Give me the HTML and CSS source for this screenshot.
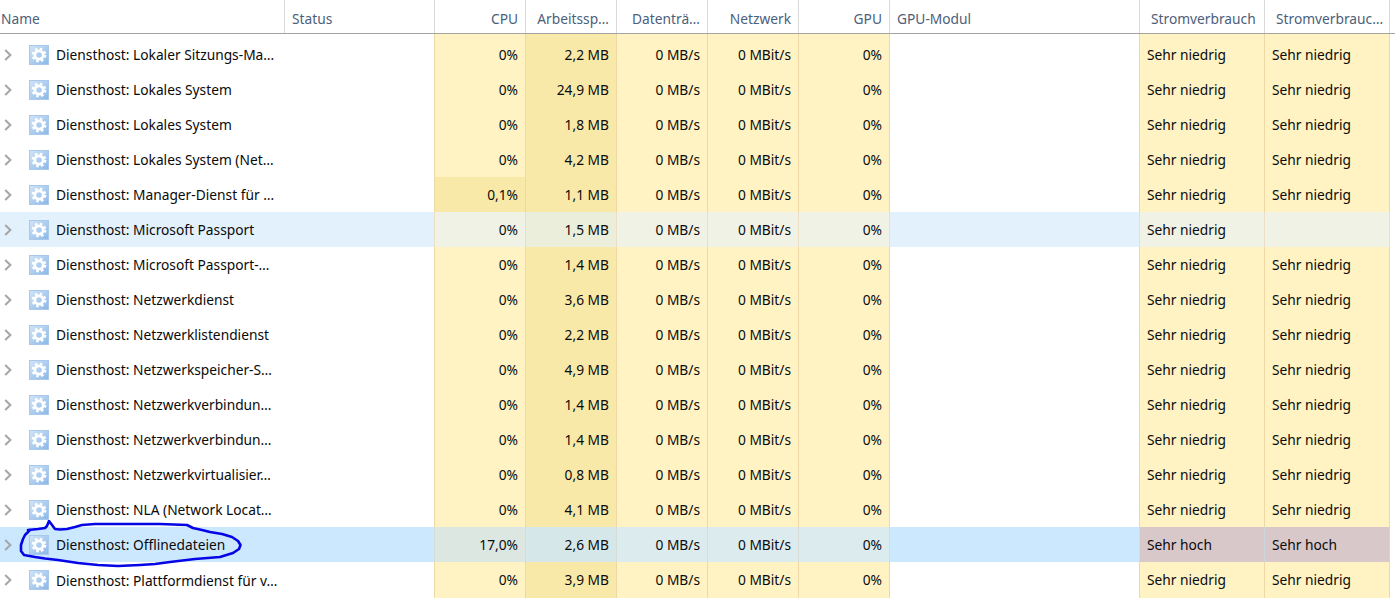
FILE: index.html
```html
<!DOCTYPE html>
<html lang="de">
<head>
<meta charset="utf-8">
<title>Task-Manager</title>
<link rel="stylesheet" href="styles.css">
</head>
<body>
<svg class="defs" width="0" height="0" aria-hidden="true">
  <defs>
    <linearGradient id="tile" x1="0" y1="0" x2="1" y2="1">
      <stop offset="0" stop-color="#d3e6f9"/>
      <stop offset="1" stop-color="#88b6e6"/>
    </linearGradient>
    <symbol id="svc" viewBox="0 0 20 20">
      <rect x="0" y="0" width="20" height="20" fill="url(#tile)"/>
      <rect x="0.5" y="0.5" width="19" height="19" fill="none" stroke="#a9c8ea"/>
      <circle cx="10" cy="10" r="4.2" fill="none" stroke="#fff" stroke-width="2.8"/>
      <circle cx="10" cy="10" r="6.3" fill="none" stroke="#fff" stroke-width="2.2" stroke-dasharray="2.6 2.35"/>
    </symbol>
    <symbol id="chev" viewBox="0 0 8 12">
      <path d="M1.2 1 L6.4 6 L1.2 11" fill="none" stroke="#a6a6a6" stroke-width="2"/>
    </symbol>
  </defs>
</svg>
<main class="table">
  <div class="row head">
    <div class="cell h-name">Name</div>
    <div class="cell h-status">Status</div>
    <div class="cell num">CPU</div>
    <div class="cell num">Arbeitssp…</div>
    <div class="cell num">Datenträ…</div>
    <div class="cell num">Netzwerk</div>
    <div class="cell num">GPU</div>
    <div class="cell h-status">GPU-Modul</div>
    <div class="cell h-power">Stromverbrauch</div>
    <div class="cell h-power">Stromverbrauc…</div>
  </div>

  <div class="row first">
    <div class="cell name"><svg class="chev"><use href="#chev"/></svg><svg class="ico"><use href="#svc"/></svg><span>Diensthost: Lokaler Sitzungs-Ma…</span></div>
    <div class="cell edge"></div>
    <div class="cell num y">0%</div><div class="cell num m">2,2 MB</div><div class="cell num y">0 MB/s</div><div class="cell num y">0 MBit/s</div><div class="cell num y">0%</div>
    <div class="cell edge"></div>
    <div class="cell pow y">Sehr niedrig</div><div class="cell pow y">Sehr niedrig</div>
  </div>
  <div class="row">
    <div class="cell name"><svg class="chev"><use href="#chev"/></svg><svg class="ico"><use href="#svc"/></svg><span>Diensthost: Lokales System</span></div>
    <div class="cell edge"></div>
    <div class="cell num y">0%</div><div class="cell num m">24,9 MB</div><div class="cell num y">0 MB/s</div><div class="cell num y">0 MBit/s</div><div class="cell num y">0%</div>
    <div class="cell edge"></div>
    <div class="cell pow y">Sehr niedrig</div><div class="cell pow y">Sehr niedrig</div>
  </div>
  <div class="row">
    <div class="cell name"><svg class="chev"><use href="#chev"/></svg><svg class="ico"><use href="#svc"/></svg><span>Diensthost: Lokales System</span></div>
    <div class="cell edge"></div>
    <div class="cell num y">0%</div><div class="cell num m">1,8 MB</div><div class="cell num y">0 MB/s</div><div class="cell num y">0 MBit/s</div><div class="cell num y">0%</div>
    <div class="cell edge"></div>
    <div class="cell pow y">Sehr niedrig</div><div class="cell pow y">Sehr niedrig</div>
  </div>
  <div class="row">
    <div class="cell name"><svg class="chev"><use href="#chev"/></svg><svg class="ico"><use href="#svc"/></svg><span>Diensthost: Lokales System (Net…</span></div>
    <div class="cell edge"></div>
    <div class="cell num y">0%</div><div class="cell num m">4,2 MB</div><div class="cell num y">0 MB/s</div><div class="cell num y">0 MBit/s</div><div class="cell num y">0%</div>
    <div class="cell edge"></div>
    <div class="cell pow y">Sehr niedrig</div><div class="cell pow y">Sehr niedrig</div>
  </div>
  <div class="row">
    <div class="cell name"><svg class="chev"><use href="#chev"/></svg><svg class="ico"><use href="#svc"/></svg><span>Diensthost: Manager-Dienst für …</span></div>
    <div class="cell edge"></div>
    <div class="cell num m">0,1%</div><div class="cell num m">1,1 MB</div><div class="cell num y">0 MB/s</div><div class="cell num y">0 MBit/s</div><div class="cell num y">0%</div>
    <div class="cell edge"></div>
    <div class="cell pow y">Sehr niedrig</div><div class="cell pow y">Sehr niedrig</div>
  </div>
  <div class="row hover">
    <div class="cell name"><svg class="chev"><use href="#chev"/></svg><svg class="ico"><use href="#svc"/></svg><span>Diensthost: Microsoft Passport</span></div>
    <div class="cell edge"></div>
    <div class="cell num y">0%</div><div class="cell num m">1,5 MB</div><div class="cell num y">0 MB/s</div><div class="cell num y">0 MBit/s</div><div class="cell num y">0%</div>
    <div class="cell edge"></div>
    <div class="cell pow y">Sehr niedrig</div><div class="cell pow y"></div>
  </div>
  <div class="row">
    <div class="cell name"><svg class="chev"><use href="#chev"/></svg><svg class="ico"><use href="#svc"/></svg><span>Diensthost: Microsoft Passport-…</span></div>
    <div class="cell edge"></div>
    <div class="cell num y">0%</div><div class="cell num m">1,4 MB</div><div class="cell num y">0 MB/s</div><div class="cell num y">0 MBit/s</div><div class="cell num y">0%</div>
    <div class="cell edge"></div>
    <div class="cell pow y">Sehr niedrig</div><div class="cell pow y">Sehr niedrig</div>
  </div>
  <div class="row">
    <div class="cell name"><svg class="chev"><use href="#chev"/></svg><svg class="ico"><use href="#svc"/></svg><span>Diensthost: Netzwerkdienst</span></div>
    <div class="cell edge"></div>
    <div class="cell num y">0%</div><div class="cell num m">3,6 MB</div><div class="cell num y">0 MB/s</div><div class="cell num y">0 MBit/s</div><div class="cell num y">0%</div>
    <div class="cell edge"></div>
    <div class="cell pow y">Sehr niedrig</div><div class="cell pow y">Sehr niedrig</div>
  </div>
  <div class="row">
    <div class="cell name"><svg class="chev"><use href="#chev"/></svg><svg class="ico"><use href="#svc"/></svg><span>Diensthost: Netzwerklistendienst</span></div>
    <div class="cell edge"></div>
    <div class="cell num y">0%</div><div class="cell num m">2,2 MB</div><div class="cell num y">0 MB/s</div><div class="cell num y">0 MBit/s</div><div class="cell num y">0%</div>
    <div class="cell edge"></div>
    <div class="cell pow y">Sehr niedrig</div><div class="cell pow y">Sehr niedrig</div>
  </div>
  <div class="row">
    <div class="cell name"><svg class="chev"><use href="#chev"/></svg><svg class="ico"><use href="#svc"/></svg><span>Diensthost: Netzwerkspeicher-S…</span></div>
    <div class="cell edge"></div>
    <div class="cell num y">0%</div><div class="cell num m">4,9 MB</div><div class="cell num y">0 MB/s</div><div class="cell num y">0 MBit/s</div><div class="cell num y">0%</div>
    <div class="cell edge"></div>
    <div class="cell pow y">Sehr niedrig</div><div class="cell pow y">Sehr niedrig</div>
  </div>
  <div class="row">
    <div class="cell name"><svg class="chev"><use href="#chev"/></svg><svg class="ico"><use href="#svc"/></svg><span>Diensthost: Netzwerkverbindun…</span></div>
    <div class="cell edge"></div>
    <div class="cell num y">0%</div><div class="cell num m">1,4 MB</div><div class="cell num y">0 MB/s</div><div class="cell num y">0 MBit/s</div><div class="cell num y">0%</div>
    <div class="cell edge"></div>
    <div class="cell pow y">Sehr niedrig</div><div class="cell pow y">Sehr niedrig</div>
  </div>
  <div class="row">
    <div class="cell name"><svg class="chev"><use href="#chev"/></svg><svg class="ico"><use href="#svc"/></svg><span>Diensthost: Netzwerkverbindun…</span></div>
    <div class="cell edge"></div>
    <div class="cell num y">0%</div><div class="cell num m">1,4 MB</div><div class="cell num y">0 MB/s</div><div class="cell num y">0 MBit/s</div><div class="cell num y">0%</div>
    <div class="cell edge"></div>
    <div class="cell pow y">Sehr niedrig</div><div class="cell pow y">Sehr niedrig</div>
  </div>
  <div class="row">
    <div class="cell name"><svg class="chev"><use href="#chev"/></svg><svg class="ico"><use href="#svc"/></svg><span>Diensthost: Netzwerkvirtualisier…</span></div>
    <div class="cell edge"></div>
    <div class="cell num y">0%</div><div class="cell num m">0,8 MB</div><div class="cell num y">0 MB/s</div><div class="cell num y">0 MBit/s</div><div class="cell num y">0%</div>
    <div class="cell edge"></div>
    <div class="cell pow y">Sehr niedrig</div><div class="cell pow y">Sehr niedrig</div>
  </div>
  <div class="row">
    <div class="cell name"><svg class="chev"><use href="#chev"/></svg><svg class="ico"><use href="#svc"/></svg><span>Diensthost: NLA (Network Locat…</span></div>
    <div class="cell edge"></div>
    <div class="cell num y">0%</div><div class="cell num m">4,1 MB</div><div class="cell num y">0 MB/s</div><div class="cell num y">0 MBit/s</div><div class="cell num y">0%</div>
    <div class="cell edge"></div>
    <div class="cell pow y">Sehr niedrig</div><div class="cell pow y">Sehr niedrig</div>
  </div>
  <div class="row sel">
    <div class="cell name"><svg class="chev"><use href="#chev"/></svg><svg class="ico"><use href="#svc"/></svg><span>Diensthost: Offlinedateien</span></div>
    <div class="cell edge"></div>
    <div class="cell num c">17,0%</div><div class="cell num m">2,6 MB</div><div class="cell num y">0 MB/s</div><div class="cell num y">0 MBit/s</div><div class="cell num y">0%</div>
    <div class="cell edge"></div>
    <div class="cell pow hot">Sehr hoch</div><div class="cell pow hot">Sehr hoch</div>
  </div>
  <div class="row last">
    <div class="cell name"><svg class="chev"><use href="#chev"/></svg><svg class="ico"><use href="#svc"/></svg><span>Diensthost: Plattformdienst für v…</span></div>
    <div class="cell edge"></div>
    <div class="cell num y">0%</div><div class="cell num m">3,9 MB</div><div class="cell num y">0 MB/s</div><div class="cell num y">0 MBit/s</div><div class="cell num y">0%</div>
    <div class="cell edge"></div>
    <div class="cell pow y">Sehr niedrig</div><div class="cell pow y">Sehr niedrig</div>
  </div>

  <svg class="scribble" viewBox="0 0 260 60" width="260" height="60" aria-hidden="true">
    <path d="M28 10 L38 9 L45 8 L47 6 L49 1 L52 5 L55 9 L60 9.500 L67 9 L75 7 L82 5 L95 4 L115 4 L130 4 L160 4 L187 5 L193 8 L202 10 L210 12 L222 14 L232 17 L238 21 L240.500 25 L239 29 L233 33 L220 37 L195 39 L170 42 L155 44 L140 45 L118 46 L98 45 L78 43 L58 40 L45 38.500 L35 37 L24 35 L21 31 L21 25 L23 19 L25 15 L30 10" fill="none" stroke="#0505e6" stroke-width="2.6" stroke-linecap="round" stroke-linejoin="round"/>
  </svg>
</main>
</body>
</html>
```

FILE: styles.css
```css
* { box-sizing: border-box; }
html, body { margin: 0; padding: 0; background: #fff; overflow: hidden; }
body {
  width: 1395px;
  height: 598px;
  font-family: "Noto Sans", "Open Sans", sans-serif;
  font-size: 13.75px;
  color: #0a0a0a;
}
.defs { position: absolute; }
.table { position: relative; height: 598px; overflow: hidden; }
.row {
  display: grid;
  grid-template-columns: 285px 150px 91px 91px 91px 91px 91px 250px 125px 125px;
  width: 1390px;
  height: 35px;
  line-height: 35px;
}
.last { height: 36px; }
.cell {
  white-space: nowrap;
  overflow: hidden;
  border-right: 1px solid transparent;
}
.num { text-align: right; padding-right: 7px; }
.edge { border-right-color: #eed9a6; }

.head {
  width: 100%;
  height: 34px;
  line-height: 38px;
  border-bottom: 1px solid #a3a3a3;
  color: #4c607a;
}
.head .cell { border-right-color: #d9d9d9; }
.h-name { padding-left: 1px; }
.h-status { padding-left: 7px; }
.h-power { padding-left: 11px; }

.first { height: 38px; padding-top: 3px; }
.first .y, .first .m { margin-top: -3px; padding-top: 3px; height: 38px; }
.first .edge { margin-top: -3px; height: 38px; }

.name { display: flex; align-items: center; }
.chev { width: 8px; height: 12px; margin-left: 4px; flex: none; }
.ico { width: 20px; height: 20px; margin-left: 17px; margin-right: 7px; flex: none; }

.y { background: #fff3c4; border-right-color: #eed9a6; }
.m { background: #f9e9a8; border-right-color: #eed9a6; }
.pow { padding-left: 7px; }

.hover { background: #e3f1fc; }
.hover .edge { border-right-color: #ecdfc5; }
.hover .y { background: #f0f2e6; border-right-color: #ecdfc5; }
.hover .m { background: #ebeedb; border-right-color: #ecdfc5; }

.sel { background: #cce8ff; }
.sel .edge { border-right-color: #d6ddd6; }
.sel .c { background: #dce7e1; border-right-color: #d6ddd6; }
.sel .y { background: #dbebee; border-right-color: #d6ddd6; }
.sel .m { background: #d6e7e9; border-right-color: #d6ddd6; }
.sel .hot { background: #d8c8ca; border-right: 1px solid #ccd6de; }

.scribble { position: absolute; left: 0; top: 520px; }
```
